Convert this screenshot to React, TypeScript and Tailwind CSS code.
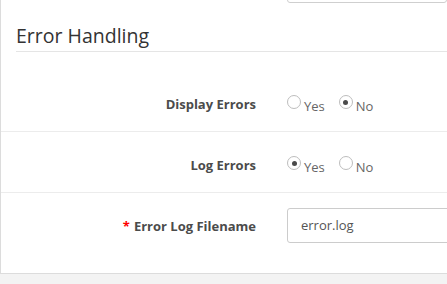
import React from "react";

function Radio({ checked }: { checked: boolean }) {
  return (
    <span className="relative inline-block w-[14px] h-[14px] rounded-full border border-[#bdbdbd] bg-white">
      {checked && (
        <span className="absolute left-[3.5px] top-[3.5px] w-[5px] h-[5px] rounded-full bg-[#4a4a4a]" />
      )}
    </span>
  );
}

function RadioGroup({ value }: { value: "yes" | "no" }) {
  return (
    <div className="flex items-start pt-[9px] text-[13px] leading-[18.57px] text-[#666]">
      <label className="flex items-start">
        <span><Radio checked={value === "yes"} /></span>
        <span className="ml-[3px] pt-[2px]">Yes</span>
      </label>
      <label className="flex items-start ml-[14px]">
        <span><Radio checked={value === "no"} /></span>
        <span className="ml-[3px] pt-[2px]">No</span>
      </label>
    </div>
  );
}

function Label({ children, required }: { children: React.ReactNode; required?: boolean }) {
  return (
    <div className="w-[271px] shrink-0 pr-[16px] pt-[9px] text-right text-[13px] font-bold leading-[18.57px] text-[#4b4b4b]">
      {required && <span className="text-[#f00] mr-[4px]">*</span>}
      {children}
    </div>
  );
}

export default function App() {
  return (
    <div
      className="w-[447px] h-[284px] overflow-hidden bg-[#f3f3f3]"
      style={{ fontFamily: '"Open Sans", Arial, sans-serif' }}
    >
      <div className="h-[274px] bg-white border-l border-b border-[#dcdcdc] overflow-hidden">
        <div className="ml-[286px] mt-[-32px] h-[35px] rounded-[3px] border border-[#cfcfcf] bg-white px-[13px] pt-[13px] text-[13px] leading-[18px] text-[#555] whitespace-nowrap overflow-hidden">
          gif, png, jpg
        </div>
        <div className="ml-[15px] mt-[18px] border-b border-[#e5e5e5] h-[31px] text-[19.5px] leading-[30px] text-[#333]">
          Error Handling
        </div>
        <div className="mt-[18px] border-t border-transparent py-[15px] flex h-[61px]">
          <Label>Display Errors</Label>
          <div className="pl-[15px]">
            <RadioGroup value="no" />
          </div>
        </div>
        <div className="border-t border-[#ececec] py-[15px] flex h-[61px]">
          <Label>Log Errors</Label>
          <div className="pl-[15px]">
            <RadioGroup value="yes" />
          </div>
        </div>
        <div className="border-t border-[#ececec] pt-[15px] flex">
          <Label required>Error Log Filename</Label>
          <div className="pl-[15px] flex-1">
            <div className="h-[35px] w-[200px] rounded-[3px] border border-[#cccccc] px-[13px] text-[13px] leading-[33px] text-[#555]">
              error.log
            </div>
          </div>
        </div>
      </div>
    </div>
  );
}
